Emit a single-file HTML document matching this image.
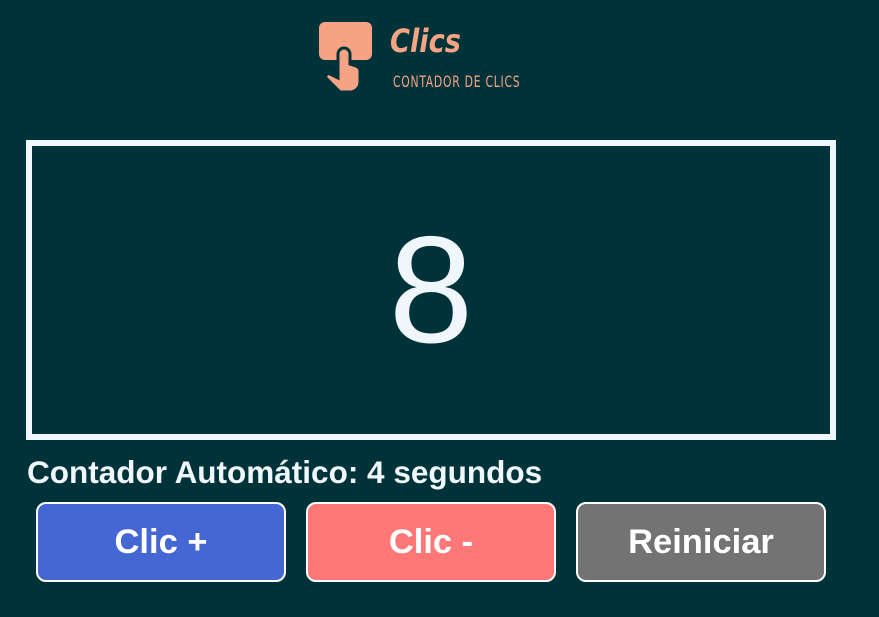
<!DOCTYPE html>
<html><head><style>
body{margin:0;width:879px;height:617px;background:#003339;font-family:"Liberation Sans",sans-serif;position:relative;overflow:hidden}
.box{position:absolute;left:26px;top:140px;width:798px;height:288px;border:6px solid #eff6fc;color:#eff6fc;font-size:152px;text-align:center;line-height:288px}
.lbl{position:absolute;left:27px;top:454px;color:#eff6fc;font-weight:bold;font-size:31.5px}
.btn{position:absolute;top:502px;width:246px;height:76px;border:2px solid #fff;border-radius:10px;color:#fff;font-weight:bold;font-size:34.5px;text-align:center;line-height:76px;box-sizing:content-box}
</style></head><body>
<svg style="position:absolute;left:318px;top:22px" width="56" height="72" viewBox="0 0 56 72">
<rect x="1" y="0" width="53" height="38" rx="6" fill="#f4a384"/>
<path d="M20 32 a6 6 0 0 1 12 0 v10 l6 2 a6 6 0 0 1 4 6 v10 a10 10 0 0 1 -10 10 h-10 l-14 -14 a3 3 0 0 1 4 -4 l8 4 z" fill="#f4a384" stroke="#003339" stroke-width="3"/>
</svg>
<div style="position:absolute;left:390px;top:22px;color:#f4a384;font-size:32px;font-style:italic;font-weight:bold;font-family:'DejaVu Sans',sans-serif;transform:scaleX(0.85);transform-origin:left">Clics</div>
<div style="position:absolute;left:393px;top:72px;color:#f4a384;font-size:16px;letter-spacing:1px;font-family:'DejaVu Sans Condensed','DejaVu Sans',sans-serif;transform:scaleX(0.75);transform-origin:left">CONTADOR DE CLICS</div>
<div class="box">8</div>
<div class="lbl">Contador Automático: 4 segundos</div>
<div class="btn" style="left:36px;background:#4567d3">Clic +</div>
<div class="btn" style="left:306px;background:#ff7777">Clic -</div>
<div class="btn" style="left:576px;background:#737373">Reiniciar</div>
</body></html>
